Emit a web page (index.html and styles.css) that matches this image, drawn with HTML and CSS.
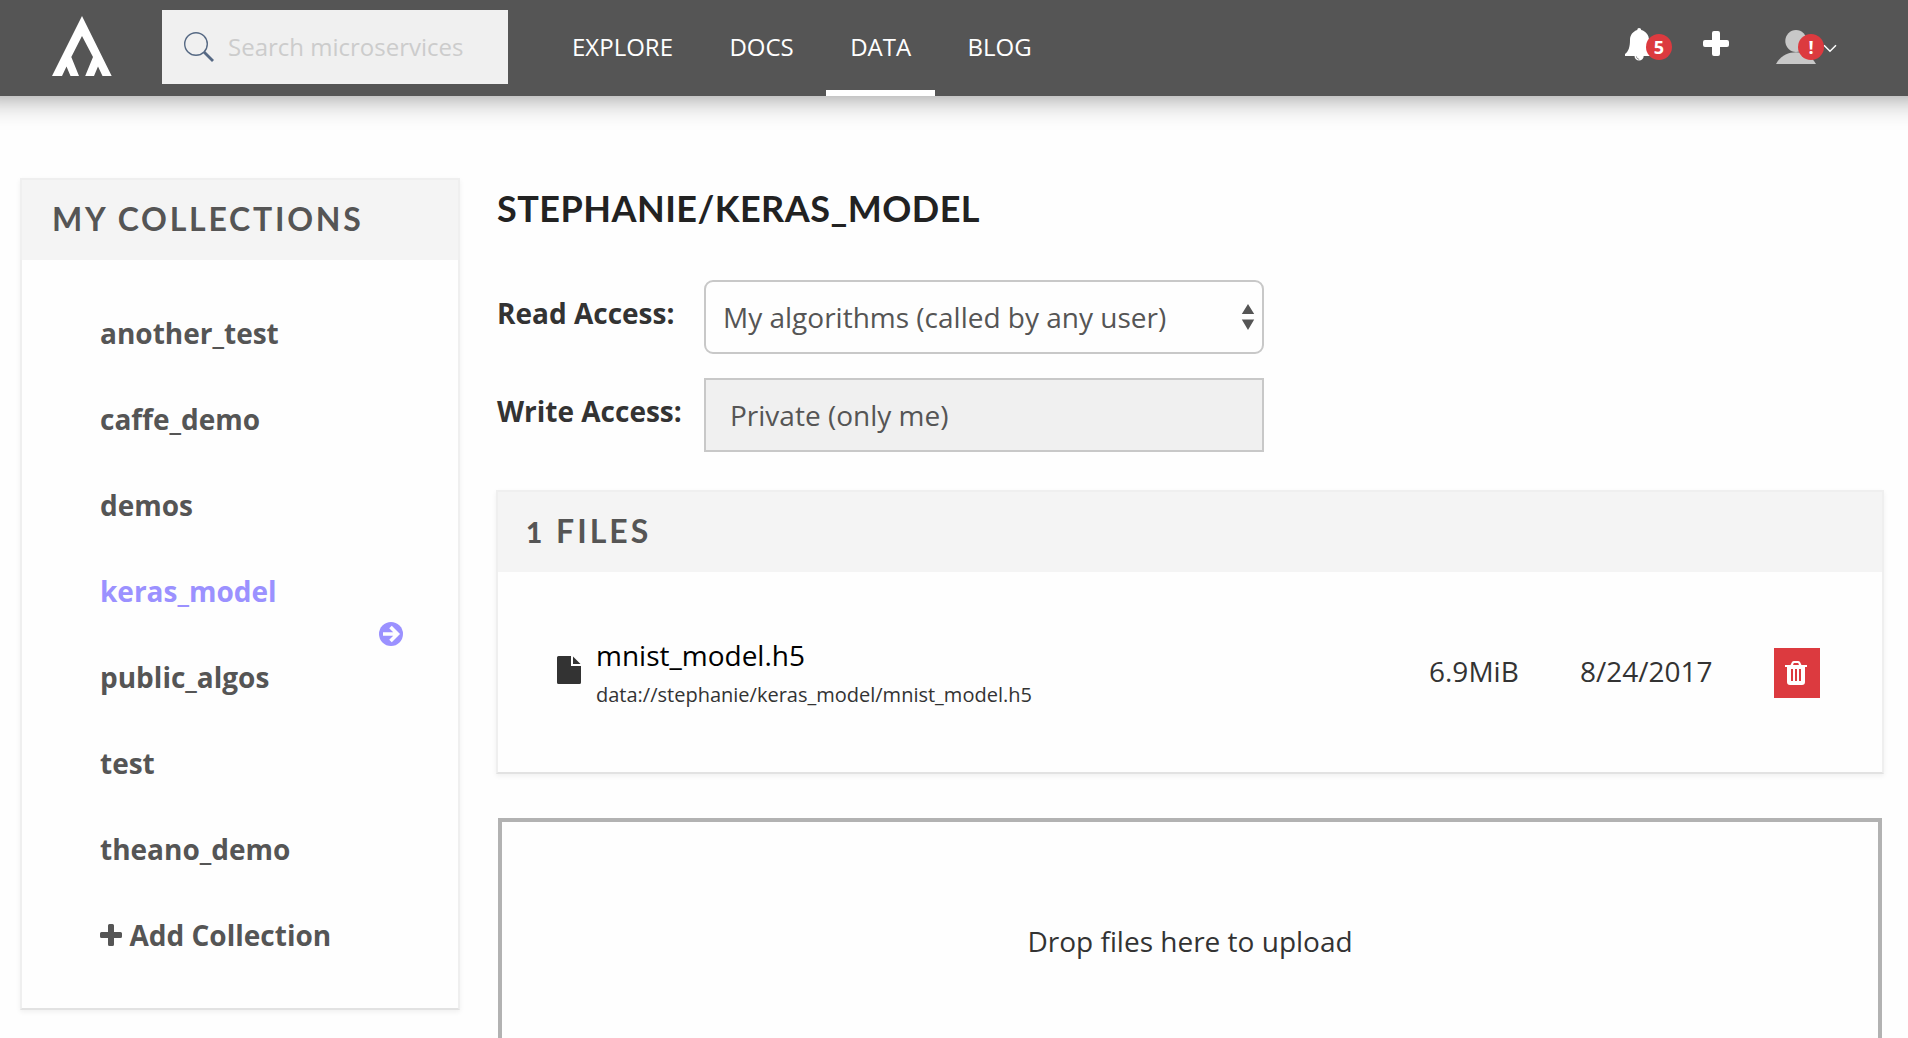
FILE: index.html
```html
<!DOCTYPE html>
<html lang="en">
<head>
<meta charset="utf-8">
<title>Data - keras_model</title>
<link rel="stylesheet" href="styles.css">
</head>
<body>
<header class="topbar">
  <a class="logo"><svg width="60" height="60" viewBox="0 0 60 60"><path fill="#fff" d="M30 0 59.7 60H50.5L46 50.5 42 60H33.2L41 41 30 20 19.3 41 27 60H18.5L14.5 50.5 10 60H0Z"/></svg></a>
  <div class="search">
    <svg width="30" height="30" viewBox="0 0 30 30" fill="none" stroke="#566984"><circle cx="12" cy="12" r="11.3" stroke-width="1.4"/><path d="M20 20 29 29" stroke-width="2.8"/></svg>
    <span class="search-text">Search microservices</span>
  </div>
  <nav class="nav">
    <a class="nav-link">EXPLORE</a>
    <a class="nav-link">DOCS</a>
    <a class="nav-link active">DATA</a>
    <a class="nav-link">BLOG</a>
  </nav>
  <div class="tools">
    <div class="bell"><svg width="28" height="34" viewBox="0 0 28 34"><path fill="#fff" d="M14 0c1.300 0 2.200.9 2.200 2.100C21 3.400 24 7.200 24 12c0 7 1 10 4 13v3H18.700a4.600 4.600 0 0 1-9.200 0H0v-2c3.500-2.500 5-7 5-14C5 7 8 3.400 12.300 2.100 12.300.9 13 0 14 0z"/><path d="M11.500 28.500c0 1.500 1.200 2.700 2.700 2.700" fill="none" stroke="#555" stroke-width=".7"/></svg><span class="badge">5</span></div>
    <svg class="plus" width="26" height="26" viewBox="0 0 26 26"><path fill="#fff" d="M11 0h4q2 0 2 2v7h7q2 0 2 2v3q0 2-2 2h-7v7q0 2-2 2h-4q-2 0-2-2v-7H2q-2 0-2-2v-3q0-2 2-2h7V2q0-2 2-2z"/></svg>
    <div class="user"><svg width="40" height="34" viewBox="0 0 40 34" fill="#c8c8c8"><ellipse cx="20" cy="11" rx="10.700" ry="11"/><path d="M0 34C4 26.500 11 22.200 20 22.200S36 26.500 40 34z"/></svg><span class="badge">!</span>
    <svg class="chev" width="14" height="9" viewBox="0 0 14 9" fill="none" stroke="#fff" stroke-width="1.500"><path d="M1 1.200 7 7.200 13 1.200"/></svg></div>
  </div>
</header>
<div class="page">
  <aside class="card sidebar">
    <h2 class="card-head">MY COLLECTIONS</h2>
    <ul class="list">
      <li>another_test</li>
      <li>caffe_demo</li>
      <li>demos</li>
      <li class="current">keras_model <svg class="go" width="24" height="24" viewBox="0 0 24 24"><circle cx="12" cy="12" r="12" fill="#9b91ff"/><path d="M4 12H18M11.500 5 18.500 12 11.500 19" fill="none" stroke="#fefefe" stroke-width="3.600"/></svg></li>
      <li>public_algos</li>
      <li>test</li>
      <li>theano_demo</li>
      <li class="add"><svg width="22" height="22" viewBox="0 0 22 22"><path fill="#555" d="M9.500 0h3q1.500 0 1.500 1.500V8h6.500q1.500 0 1.500 1.500v3q0 1.500-1.500 1.500H14v6.500q0 1.500-1.500 1.500h-3Q8 22 8 20.500V14H1.500Q0 14 0 12.500v-3Q0 8 1.500 8H8V1.500Q8 0 9.500 0z"/></svg>Add Collection</li>
    </ul>
  </aside>
  <main class="main">
    <h1 class="title">STEPHANIE/KERAS_MODEL</h1>
    <div class="field"><label>Read Access:</label>
      <div class="control select">My algorithms (called by any user)<svg width="14" height="26" viewBox="0 0 14 26" fill="#555"><path d="M7 0 13.200 10H.8zM7 26 .8 15.500h12.400z"/></svg></div></div>
    <div class="field"><label>Write Access:</label><div class="control readonly">Private (only me)</div></div>
    <section class="card files">
      <h2 class="card-head"><span class="count">1</span> FILES</h2>
      <div class="file">
        <svg class="doc" width="24" height="28" viewBox="0 0 24 28" fill="#333"><path d="M1.500 0H14v10h10v16.500q0 1.500-1.500 1.500h-21Q0 28 0 26.500v-25Q0 0 1.500 0z"/><path d="M16 .5 23.500 8H16z"/></svg>
        <div class="names"><div class="name">mnist_model.h5</div><div class="uri">data://stephanie/keras_model/mnist_model.h5</div></div>
        <div class="size">6.9MiB</div>
        <div class="date">8/24/2017</div>
        <button class="delete" type="button"><svg width="22" height="24" viewBox="0 0 22 24"><path fill="#fff" fill-rule="evenodd" d="M0 4h5.500L7 1q.6-1 2-1h4q1.400 0 2 1l1.500 3H22v2h-2v15q0 3-3 3H5q-3 0-3-3V6H0zM8 4h6l-.8-2H8.800zM6 8v12h2V8zm4 0v12h2V8zm4 0v12h2V8z"/></svg></button>
      </div>
    </section>
    <div class="dropzone">Drop files here to upload</div>
  </main>
</div>
</body>
</html>
```
FILE: styles.css
```css
* { box-sizing: border-box; }
body { margin: 0; height: 1038px; overflow: hidden; background: #fefefe; color: #333; font: 28px/40px "Open Sans", sans-serif; }
svg { display: block; flex: none; }
h1, h2, ul { margin: 0; padding: 0; }
.topbar { display: flex; height: 96px; background: #555; box-shadow: 0 -30px 28px 30px rgba(0, 0, 0, .45); }
.logo { margin: 16px 50px 0 52px; width: 60px; }
.search { display: flex; width: 346px; height: 74px; margin-top: 10px; padding: 22px 0 0 22px; background: #f0f0f0; }
.search-text { margin: -22px 0 0 14px; color: #ccc; font-size: 24px; line-height: 73px; white-space: nowrap; }
.nav { display: flex; gap: 8.4px; margin-left: 40px; }
.nav-link { height: 96px; padding: 0 24px; color: #fff; font-size: 24px; line-height: 93px; }
.active { box-shadow: inset 0 -6px #fff; }
.tools { display: flex; margin: 28px 71px 0 auto; }
.bell { position: relative; width: 47px; }
.badge { position: absolute; left: 21px; top: 6px; width: 26px; height: 26px; border-radius: 13px; background: #dc3a3f; color: #fff; text-align: center; font-size: 18px; font-weight: 700; line-height: 26px; }
.plus { margin: 3px 47px 0 31px; }
.user { position: relative; display: flex; padding-top: 2px; }
.user .badge { left: 22px; }
.chev { margin: 14px 0 0 7px; }
.page { display: flex; gap: 36px; height: 942px; overflow: hidden; padding: 82px 24px 0 20px; }
.card { border: 2px solid #efefef; border-bottom-color: #e2e2e2; background: #fefefe; box-shadow: 0 2px 5px rgba(0, 0, 0, .06); }
.card-head { height: 80px; background: #f4f4f4; color: #555; font: 700 32px/77px Lato, sans-serif; letter-spacing: 2.75px; }
.sidebar { width: 440px; height: 832px; }
.sidebar .card-head { padding-left: 30px; }
.list { padding: 30px 55px 0 78px; list-style: none; color: #555; font-weight: 700; line-height: 86px; }
.list li { display: flex; height: 86px; }
.current { color: #9b91ff; justify-content: space-between; }
.go { margin-top: 74px; }
.add { gap: 7.5px; }
.add svg { margin-top: 32px; }
.main { flex: 1; padding-top: 8px; }
.title { margin: 0 0 50px 1px; color: #222; font: 700 36px/44px Lato, sans-serif; letter-spacing: .48px; }
.field { display: flex; height: 74px; margin-bottom: 24px; }
.field label { width: 208px; padding-left: 1px; font-weight: 700; line-height: 66px; }
.control { display: flex; justify-content: space-between; width: 560px; border: 2px solid #c8c8c8; color: #555; line-height: 70px; }
.select { padding: 0 7px 0 17px; border-radius: 9px; }
.select svg { margin-top: 22px; }
.readonly { padding-left: 24px; background: #f0f0f0; }
.files { height: 284px; margin-top: 38px; }
.files .card-head { padding-left: 28px; letter-spacing: 3px; }
.count { font-size: 28px; font-weight: 900; }
.file { display: flex; height: 200px; padding: 0 62px 0 59px; }
.doc { margin-top: 84px; }
.names { flex: none; width: 848px; padding: 63px 0 0 15px; }
.name { color: #000; }
.uri { font-size: 20px; }
.size { flex: none; width: 151px; line-height: 198px; }
.date { line-height: 198px; }
.delete { width: 46px; height: 50px; margin: 76px 0 0 auto; padding: 0 0 0 11px; border: 0; background: #dc3a3f; }
.dropzone { height: 330px; margin: 44px 2px 0; padding-top: 99px; border: 4px solid #b2b2b2; text-align: center; }
```
